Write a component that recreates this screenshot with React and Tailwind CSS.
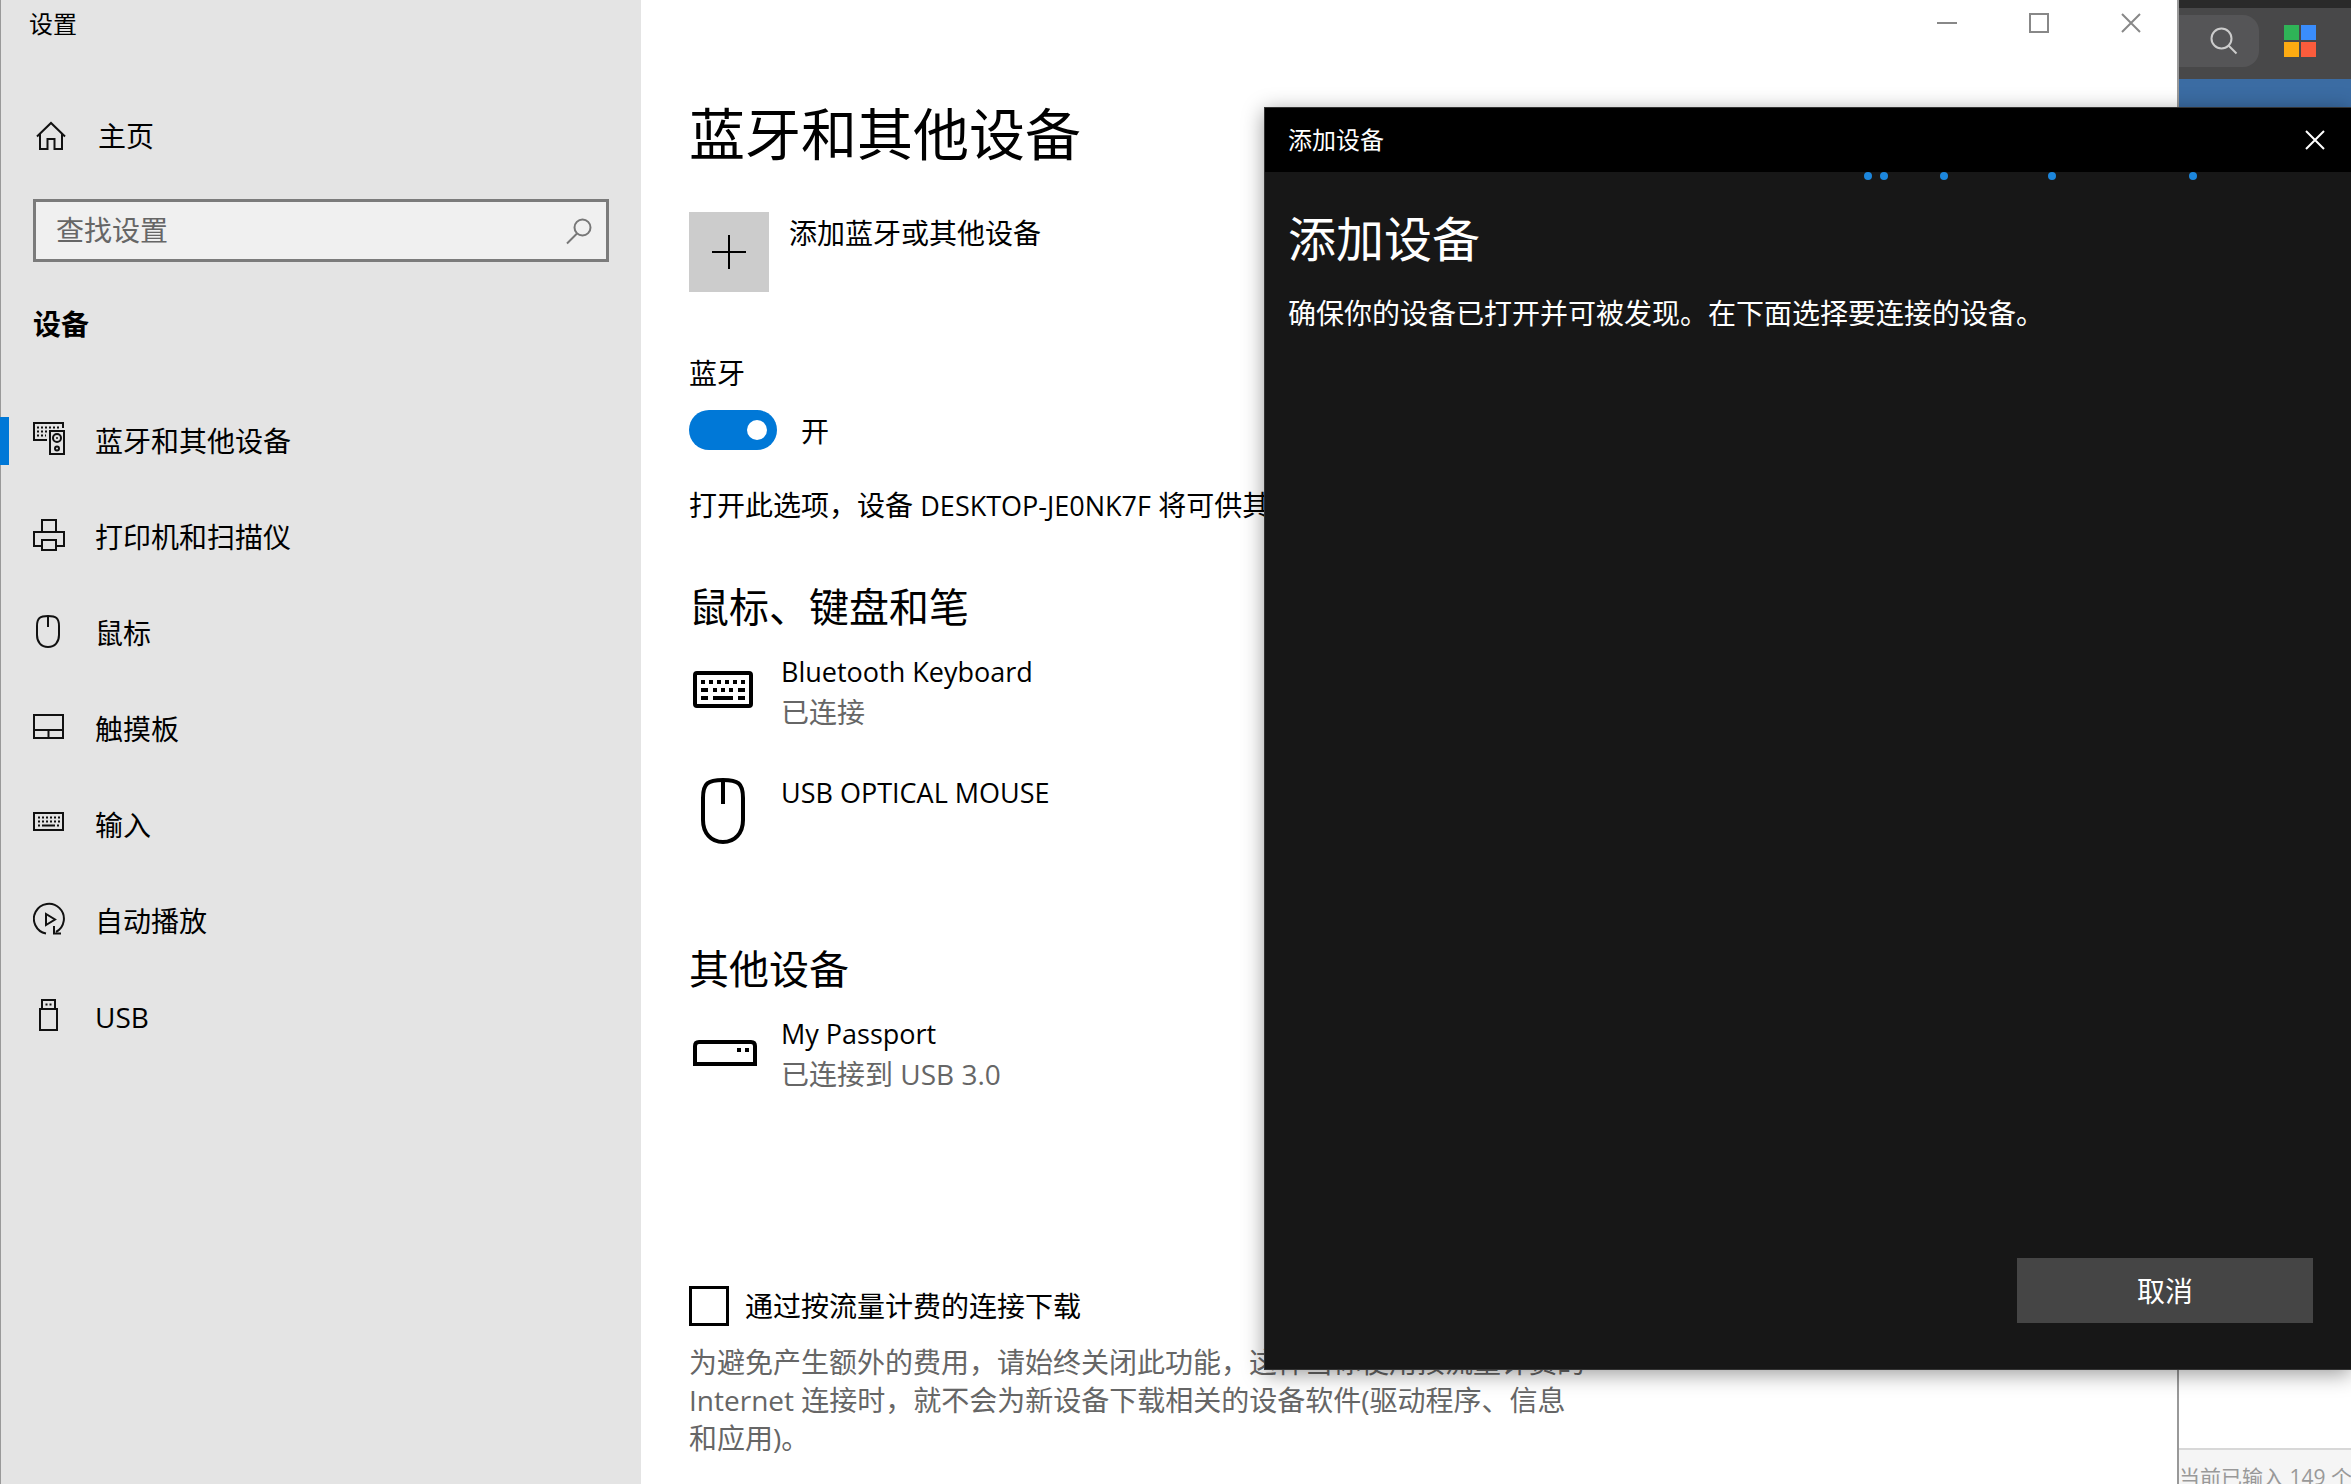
import React, { useState } from 'react';

const HomeIcon = () => (
  <svg width="32" height="32" viewBox="0 0 32 32" fill="none" stroke="#111" strokeWidth="2">
    <path d="M2 16.5 16 3l14 13.5M5 14v15h7.5V19h7v10H27V14" />
  </svg>
);

const BluetoothIcon = () => (
  <svg width="32" height="34" viewBox="0 0 32 34" fill="none" stroke="#111" strokeWidth="2">
    <path d="M14 18H1V1h29v5" />
    <path d="M4 5.5h24M4 9.5h10M4 13.5h9" strokeDasharray="2 2" />
    <path d="M17 9h14v23H17z" />
    <circle cx="24" cy="16" r="4" />
    <circle cx="24" cy="16" r="1" fill="#111" stroke="none" />
    <circle cx="24" cy="26.5" r="2" />
  </svg>
);

const PrinterIcon = () => (
  <svg width="32" height="34" viewBox="0 0 32 34" fill="none" stroke="#111" strokeWidth="2">
    <path d="M9 13V2h14v11M9 28H1V14h30v14h-8" />
    <path d="M9 22h14v10H9z" />
  </svg>
);

const MouseIcon = () => (
  <svg width="32" height="34" viewBox="0 0 32 34" fill="none" stroke="#111" strokeWidth="2">
    <path d="M4 12C4 4 7 2 15 2s11 2 11 10v9c0 7-4 12-11 12S4 28 4 21z" />
    <path d="M15 2v11" />
  </svg>
);

const TouchpadIcon = () => (
  <svg width="32" height="34" viewBox="0 0 32 34" fill="none" stroke="#111" strokeWidth="2">
    <path d="M1 5h29v23H1zM1 20h29M15.5 20v8" />
  </svg>
);

const TypingIcon = () => (
  <svg width="32" height="34" viewBox="0 0 32 34" fill="none" stroke="#111" strokeWidth="2">
    <path d="M1 7h29v17H1z" />
    <path d="M5 11.5h22M5 15.5h22" strokeDasharray="2 2" />
    <path d="M5 19.5h2M9 19.5h13M24 19.5h2" />
  </svg>
);

const AutoPlayIcon = () => (
  <svg width="32" height="34" viewBox="0 0 32 34" fill="none" stroke="#111" strokeWidth="2">
    <path d="M13 31.5A15 15 0 1 1 23 30" />
    <path d="M21 24v7.5h7" />
    <path d="M13 12v11l9-5.5z" />
  </svg>
);

const UsbIcon = () => (
  <svg width="32" height="34" viewBox="0 0 32 34" fill="none" stroke="#111" strokeWidth="2">
    <path d="M7 11h17v21H7zM9 11V2h13v9" />
    <path d="M12.5 6.5h2M16.5 6.5h2" />
  </svg>
);

const KeyboardDeviceIcon = () => (
  <svg width="60" height="66" viewBox="0 0 60 66" fill="none" stroke="#000" strokeWidth="4">
    <rect x="2" y="16" width="56" height="33" rx="2" />
    <path d="M8 25h46" strokeDasharray="4 4" />
    <path d="M8 33h7M20 33h4M28 33h4M36 33h4M45 33h7M8 41h7M20 41h20M45 41h7" />
  </svg>
);

const MouseDeviceIcon = () => (
  <svg width="60" height="66" viewBox="0 0 60 66" fill="none" stroke="#000" strokeWidth="4">
    <path d="M10 20C10 5 15 2 30 2s20 3 20 18v22c0 13-8 22-20 22s-20-9-20-22z" />
    <path d="M30 2v24" />
  </svg>
);

const DriveDeviceIcon = () => (
  <svg width="64" height="66" viewBox="0 0 64 66" fill="none" stroke="#000" strokeWidth="4">
    <path d="M2 45V27q0-4 4-4h52q4 0 4 4v18z" />
    <path d="M44 31h4M52 31h4" />
  </svg>
);

const navItems = [
  { label: '蓝牙和其他设备', icon: BluetoothIcon, active: true },
  { label: '打印机和扫描仪', icon: PrinterIcon },
  { label: '鼠标', icon: MouseIcon },
  { label: '触摸板', icon: TouchpadIcon },
  { label: '输入', icon: TypingIcon },
  { label: '自动播放', icon: AutoPlayIcon },
  { label: 'USB', icon: UsbIcon },
];

const Device = ({ icon: Icon, name, status }) => (
  <li className="flex h-[121px] items-start">
    <div className="w-[92px] shrink-0 pl-1 pt-[5px]">
      <Icon />
    </div>
    <div className="text-[27px] leading-10">
      <p>{name}</p>
      {status && <p className="text-[28px] text-[#666]">{status}</p>}
    </div>
  </li>
);

const Sidebar = () => (
  <aside className="w-[641px] shrink-0 border-l border-[#999] bg-[#e4e4e4]">
    <p className="pl-7 pt-2 text-2xl leading-8">设置</p>
    <a href="#home" className="mt-[76px] flex h-10 items-center gap-[31px] pl-[34px]">
      <HomeIcon />
      <span>主页</span>
    </a>
    <form
      className="ml-8 mr-8 mt-[43px] flex h-[63px] items-center border-[3px] border-[#7b7b7b] bg-[#f0f0f0] pl-5 pr-[13px]"
      onSubmit={e => e.preventDefault()}
    >
      <input
        type="search"
        aria-label="查找设置"
        placeholder="查找设置"
        className="h-full min-w-0 flex-1 bg-transparent pb-[2px] outline-none placeholder:text-[#666]"
      />
      <button type="submit" aria-label="搜索">
        <svg width="28" height="28" viewBox="0 0 28 28" fill="none" stroke="#777" strokeWidth="2">
          <circle cx="17.5" cy="10.5" r="8" />
          <path d="M12 16.5 2 26.5" />
        </svg>
      </button>
    </form>
    <h2 className="mt-[42px] pl-8 font-bold leading-10">设备</h2>
    <nav className="mt-[49px]">
      {navItems.map(({ label, icon: Icon, active }) => (
        <a key={label} href="#section" className="-ml-px flex h-24 items-center">
          <span className={active ? 'h-12 w-[9px] bg-[#0078d7]' : 'h-12 w-[9px]'} />
          <span className="ml-6 mr-[30px] pb-1">
            <Icon />
          </span>
          <span>{label}</span>
        </a>
      ))}
    </nav>
  </aside>
);

const SettingsPage = () => {
  const [bluetooth, setBluetooth] = useState(true);
  const [metered, setMetered] = useState(false);

  return (
    <main className="min-w-0 flex-1 bg-white">
      <div className="flex h-[46px] items-center justify-end gap-[72px] pr-9 text-[#888]">
        <button type="button" aria-label="最小化">
          <svg width="20" height="20" viewBox="0 0 20 20" stroke="currentColor" strokeWidth="2">
            <path d="M0 10h20" />
          </svg>
        </button>
        <button type="button" aria-label="最大化">
          <svg width="20" height="20" viewBox="0 0 20 20" fill="none" stroke="currentColor" strokeWidth="2">
            <path d="M1 1h18v18H1z" />
          </svg>
        </button>
        <button type="button" aria-label="关闭">
          <svg width="20" height="20" viewBox="0 0 20 20" stroke="currentColor" strokeWidth="2">
            <path d="m1 1 18 18M19 1 1 19" />
          </svg>
        </button>
      </div>

      <div className="pl-12">
        <h1 className="mt-[51px] text-[56px] leading-[72px]">蓝牙和其他设备</h1>

        <button type="button" className="mt-[43px] flex items-start gap-5 text-left">
          <span className="flex size-20 items-center justify-center bg-[#ccc]">
            <svg width="34" height="34" viewBox="0 0 34 34" stroke="#000" strokeWidth="2">
              <path d="M17 0v34M0 17h34" />
            </svg>
          </span>
          <span className="leading-[42px]">添加蓝牙或其他设备</span>
        </button>

        <label htmlFor="bluetooth" className="mt-[61px] block leading-10">蓝牙</label>
        <div className="mt-[17px] flex h-10 items-center gap-6">
          <input
            id="bluetooth"
            type="checkbox"
            role="switch"
            checked={bluetooth}
            onChange={e => setBluetooth(e.target.checked)}
            className="flex h-10 w-[88px] appearance-none items-center rounded-full bg-[#999] px-[10px] before:size-5 before:rounded-full before:bg-white checked:justify-end checked:bg-[#0078d7]"
          />
          <span className="pt-[2px]">{bluetooth ? '开' : '关'}</span>
        </div>
        <p className="mt-[35px] whitespace-nowrap leading-10">
          打开此选项，设备 <span className="text-[27px]">DESKTOP-JE0NK7F</span> 将可供其他设备发现。
        </p>

        <h2 className="mt-[55px] text-[40px] leading-[52px]">鼠标、键盘和笔</h2>
        <ul className="mt-[19px]">
          <Device icon={KeyboardDeviceIcon} name="Bluetooth Keyboard" status="已连接" />
          <Device icon={MouseDeviceIcon} name="USB OPTICAL MOUSE" />
        </ul>

        <h2 className="mt-[49px] text-[40px] leading-[52px]">其他设备</h2>
        <ul className="mt-[19px]">
          <Device icon={DriveDeviceIcon} name="My Passport" status="已连接到 USB 3.0" />
        </ul>

        <label className="mt-[151px] flex h-10 items-center gap-4">
          <input
            type="checkbox"
            checked={metered}
            onChange={e => setMetered(e.target.checked)}
            className="size-10 appearance-none border-[3px] border-black bg-white checked:bg-[#0078d7]"
          />
          <span>通过按流量计费的连接下载</span>
        </label>
        <p className="mt-[17px] max-w-[896px] leading-[38px] text-[#666]">
          为避免产生额外的费用，请始终关闭此功能，这样当你使用按流量计费的 Internet
          连接时，就不会为新设备下载相关的设备软件(驱动程序、信息和应用)。
        </p>
      </div>
    </main>
  );
};

// Slice of the browser window that is open behind the settings
const BackgroundWindow = () => (
  <div className="flex w-[174px] shrink-0 flex-col border-l-2 border-[#999] bg-white">
    <div className="h-2 bg-[#2a2a2a]" />
    <div className="flex h-[71px] items-center bg-[#484849] pb-[5px]">
      <button type="button" aria-label="搜索" className="flex h-[52px] w-[80px] items-center rounded-r-2xl bg-[#555557] pl-[31px]">
        <svg width="28" height="28" viewBox="0 0 28 28" fill="none" stroke="#ccc" strokeWidth="2">
          <circle cx="11.5" cy="11.5" r="10" />
          <path d="m18.5 18.5 8 8" />
        </svg>
      </button>
      <svg className="ml-[25px]" width="32" height="32" viewBox="0 0 32 32">
        <path fill="#2fb457" d="M0 0h15v15H0z" />
        <path fill="#3a8dfc" d="M17 0h15v15H17z" />
        <path fill="#fdab12" d="M0 17h15v15H0z" />
        <path fill="#fb5c3c" d="M17 17h15v15H17z" />
      </svg>
    </div>
    <div className="h-7 bg-[#3b6ca3]" />
    <div className="flex-1" />
    <div className="h-9 overflow-hidden whitespace-nowrap border-t-2 border-[#d8d8d8] bg-[#f5f5f5] pt-[11px] text-[21px] leading-8 text-[#999]">
      当前已输入 149 个
    </div>
  </div>
);

const AddDeviceDialog = () => (
  <section
    role="dialog"
    aria-labelledby="dialog-title"
    className="absolute right-0 top-[107px] flex h-[1263px] w-[1087px] flex-col border-y border-l border-[#333] bg-[#171717] text-white shadow-[0_4px_20px_rgba(0,0,0,0.4)]"
  >
    <header className="flex h-[64px] items-center justify-between bg-black pl-[23px] pr-[26px] text-2xl">
      <span>添加设备</span>
      <button type="button" aria-label="关闭">
        <svg width="20" height="20" viewBox="0 0 20 20" stroke="currentColor" strokeWidth="2">
          <path d="m1 1 18 18M19 1 1 19" />
        </svg>
      </button>
    </header>
    <div role="progressbar" aria-label="正在搜索" className="flex h-2 justify-end pr-[154px]">
      <span className="size-2 rounded-full bg-[#1c86dc]" />
      <span className="ml-2 size-2 rounded-full bg-[#1c86dc]" />
      <span className="ml-[52px] size-2 rounded-full bg-[#1c86dc]" />
      <span className="ml-[100px] size-2 rounded-full bg-[#1c86dc]" />
      <span className="ml-[133px] size-2 rounded-full bg-[#1c86dc]" />
    </div>
    <div className="flex-1 pl-[23px]">
      <h2 id="dialog-title" className="mt-[27px] text-[48px] leading-[64px]">添加设备</h2>
      <p className="mt-[22px] leading-10">确保你的设备已打开并可被发现。在下面选择要连接的设备。</p>
    </div>
    <footer className="flex justify-end pb-[46px] pr-[38px]">
      <button type="button" className="h-[65px] w-[296px] bg-[#454545]">取消</button>
    </footer>
  </section>
);

const App = () => (
  <div
    lang="zh-CN"
    className="relative flex h-screen overflow-hidden bg-white font-['Open_Sans','Noto_Sans_CJK_SC',sans-serif] text-[28px] leading-10 text-black"
  >
    <Sidebar />
    <SettingsPage />
    <BackgroundWindow />
    <AddDeviceDialog />
  </div>
);

export default App;
